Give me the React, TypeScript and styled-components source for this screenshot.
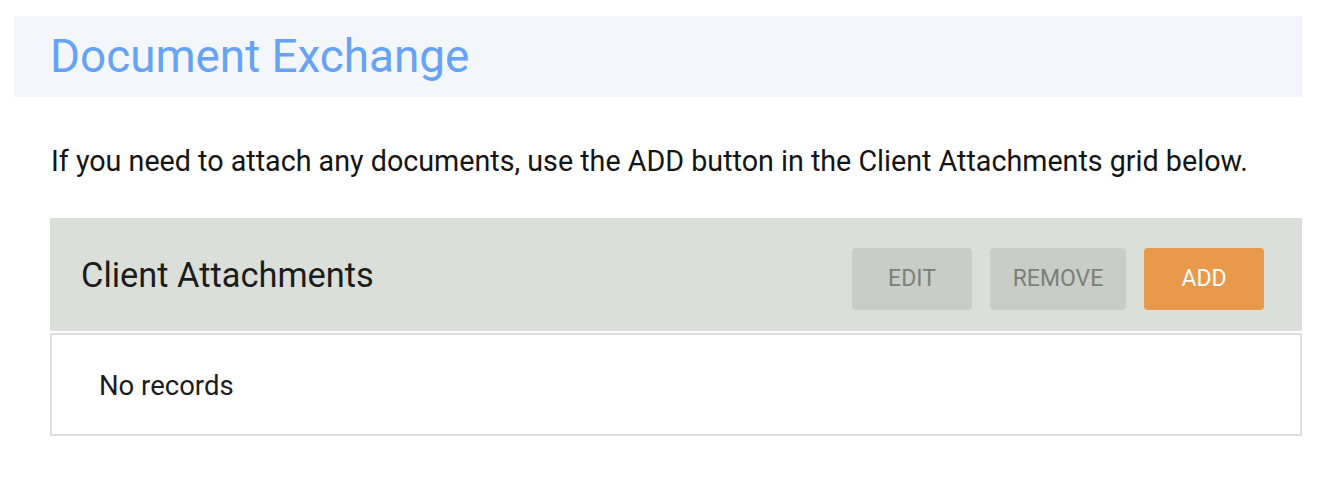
import React from 'react';
import styled, { createGlobalStyle } from 'styled-components';

const GlobalStyle = createGlobalStyle`
	html, body {
		margin: 0;
		padding: 0;
		background: #ffffff;
		font-family: Roboto, "Liberation Sans", Arial, sans-serif;
	}
`;

const Page = styled.div`
	padding: 16px 22px 0 14px;
`;

const TitleBand = styled.div`
	height: 81px;
	display: flex;
	align-items: center;
	padding-left: 36px;
	background: #f3f6fa;
`;

const Title = styled.h1`
	margin: 0;
	font-size: 45.8px;
	line-height: 54px;
	font-weight: 400;
	color: #66a3f6;
`;

const Content = styled.div`
	padding-left: 36px;
`;

const Intro = styled.p`
	margin: 0;
	padding: 47px 0 0 1px;
	height: 71px;
	box-sizing: border-box;
	font-size: 28.7px;
	line-height: 34px;
	color: #141414;
	white-space: nowrap;
`;

const Grid = styled.div`
	margin-top: 50px;
	display: flex;
	flex-direction: column;
	gap: 2px;
`;

const GridHeader = styled.div`
	height: 113px;
	display: flex;
	align-items: center;
	padding: 0 38px 0 31px;
	background: #dadfd9;
`;

const GridTitle = styled.h2`
	margin: 0;
	flex: 1;
	font-size: 34.4px;
	font-weight: 400;
	color: #1c1c1c;
`;

const Actions = styled.div`
	display: flex;
	gap: 18px;
	margin-top: 8px;
`;

const Button = styled.button<{ primary?: boolean; w: number }>`
	width: ${p => p.w}px;
	height: 62px;
	border: 0;
	border-radius: 4px;
	font-family: inherit;
	font-size: 23px;
	font-weight: 400;
	background: ${p => (p.primary ? '#e8994a' : '#c9cdc7')};
	color: ${p => (p.primary ? '#ffffff' : '#7b7f7a')};
	cursor: ${p => (p.primary ? 'pointer' : 'default')};
`;

const GridBody = styled.div`
	height: 103px;
	box-sizing: border-box;
	border: 2px solid #dcdddc;
	display: flex;
	align-items: center;
	padding: 2px 0 0 47px;
	font-size: 27.5px;
	color: #1c1c1c;
`;

export default function App() {
	return (
		<>
			<GlobalStyle />
			<Page>
				<TitleBand>
					<Title>Document Exchange</Title>
				</TitleBand>
				<Content>
					<Intro>If you need to attach any documents, use the ADD button in the Client Attachments grid below.</Intro>
					<Grid>
						<GridHeader>
							<GridTitle>Client Attachments</GridTitle>
							<Actions>
								<Button w={120} disabled>EDIT</Button>
								<Button w={136} disabled>REMOVE</Button>
								<Button w={120} primary>ADD</Button>
							</Actions>
						</GridHeader>
						<GridBody>No records</GridBody>
					</Grid>
				</Content>
			</Page>
		</>
	);
}
